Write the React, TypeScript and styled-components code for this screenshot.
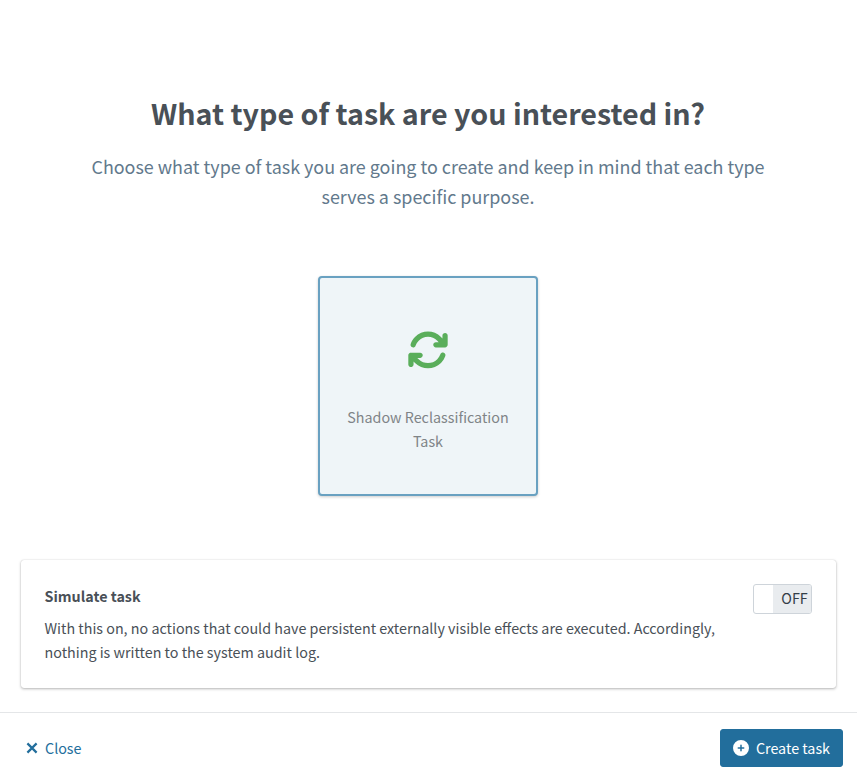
import React from 'react';
import styled, { createGlobalStyle } from 'styled-components';
import { FaArrowsRotate, FaCirclePlus } from 'react-icons/fa6';

const GlobalStyle = createGlobalStyle`
  *, *::before, *::after { box-sizing: border-box; }
  body {
    margin: 0;
    background: #fff;
    color: #495057;
    font-family: "Noto Sans CJK SC", "Noto Sans", sans-serif;
    font-size: 14.32px;
    line-height: 24px;
  }
`;

const Page = styled.div`
  display: flex;
  flex-direction: column;
  height: 780px;
`;

const Main = styled.main`
  flex: 1;
  display: flex;
  flex-direction: column;
  align-items: center;
  padding: 94px 21px 23px 20px;
`;

const Title = styled.h1`
  margin: 0;
  font-size: 28.65px;
  line-height: 38px;
  font-weight: 700;
  white-space: nowrap;
`;

const Lead = styled.p`
  margin: 19px 0 0;
  width: 700px;
  font-size: 17.91px;
  line-height: 30px;
  text-align: center;
  color: #62798c;
`;

const TypeCard = styled.button`
  display: flex;
  flex-direction: column;
  align-items: center;
  width: 220px;
  height: 220px;
  margin: 65px 0 0;
  padding: 50.5px 20px 0;
  border: 2px solid #69a1c1;
  border-radius: 4px;
  background: #eff5f8;
  box-shadow: 0 1px 3px rgba(0, 0, 0, 0.2);
  color: #7f8487;
  font: inherit;

  svg {
    margin-right: 1px;
    color: #5aae5b;
  }
`;

const TypeName = styled.span`
  margin-top: 34.5px;
`;

const Option = styled.section`
  display: flex;
  justify-content: space-between;
  width: 815px;
  height: 128px;
  margin: 64px 0 0 1px;
  padding: 24px 24px 24px 23.5px;
  border-radius: 3px;
  box-shadow: 0 0 1px rgba(0, 0, 0, 0.2), 0 1px 3px rgba(0, 0, 0, 0.28);
`;

const OptionText = styled.div`
  width: 690px;
`;

const OptionTitle = styled.h2`
  margin: 0 0 8px;
  font-size: inherit;
  line-height: 24px;
`;

const OptionBody = styled.p`
  margin: 0;
`;

const Toggle = styled.button`
  display: flex;
  width: 59px;
  height: 30px;
  padding: 0;
  border: 1px solid #ced4da;
  border-radius: 3px;
  background: #fff;
  font: inherit;
  color: #343e48;
  overflow: hidden;
`;

const ToggleLabel = styled.span`
  margin-left: auto;
  width: 38px;
  height: 28px;
  padding-right: 3.3px;
  line-height: 26px;
  text-align: right;
  background: #e9ecef;
`;

const Footer = styled.footer`
  display: flex;
  justify-content: space-between;
  align-items: flex-start;
  height: 68px;
  padding: 16px 14px 0 13px;
  border-top: 1px solid #e4e6e8;
`;

const Action = styled.button<{ $primary?: boolean }>`
  display: flex;
  align-items: center;
  gap: 7px;
  height: 38px;
  padding: 0 12px;
  border: 1px solid ${(p) => (p.$primary ? '#226e9c' : 'transparent')};
  border-radius: 3px;
  background: ${(p) => (p.$primary ? '#226e9c' : 'transparent')};
  color: ${(p) => (p.$primary ? '#fff' : '#226e9c')};
  font: inherit;
`;

const CloseIcon = () => (
  <svg width="12" height="12" viewBox="0 0 12 12" fill="none" stroke="currentColor" strokeWidth="2.2">
    <path d="M1.4 1.4 10.6 10.6M10.6 1.4 1.4 10.6" />
  </svg>
);

export default function App() {
  return (
    <Page>
      <GlobalStyle />
      <Main>
        <Title>What type of task are you interested in?</Title>
        <Lead>
          Choose what type of task you are going to create and keep in mind that each type serves a
          specific purpose.
        </Lead>
        <TypeCard>
          <FaArrowsRotate size={42} />
          <TypeName>Shadow Reclassification Task</TypeName>
        </TypeCard>
        <Option>
          <OptionText>
            <OptionTitle>Simulate task</OptionTitle>
            <OptionBody>
              With this on, no actions that could have persistent externally visible effects are
              executed. Accordingly, nothing is written to the system audit log.
            </OptionBody>
          </OptionText>
          <Toggle>
            <ToggleLabel>OFF</ToggleLabel>
          </Toggle>
        </Option>
      </Main>
      <Footer>
        <Action>
          <CloseIcon />
          Close
        </Action>
        <Action $primary>
          <FaCirclePlus size={16} />
          Create task
        </Action>
      </Footer>
    </Page>
  );
}
